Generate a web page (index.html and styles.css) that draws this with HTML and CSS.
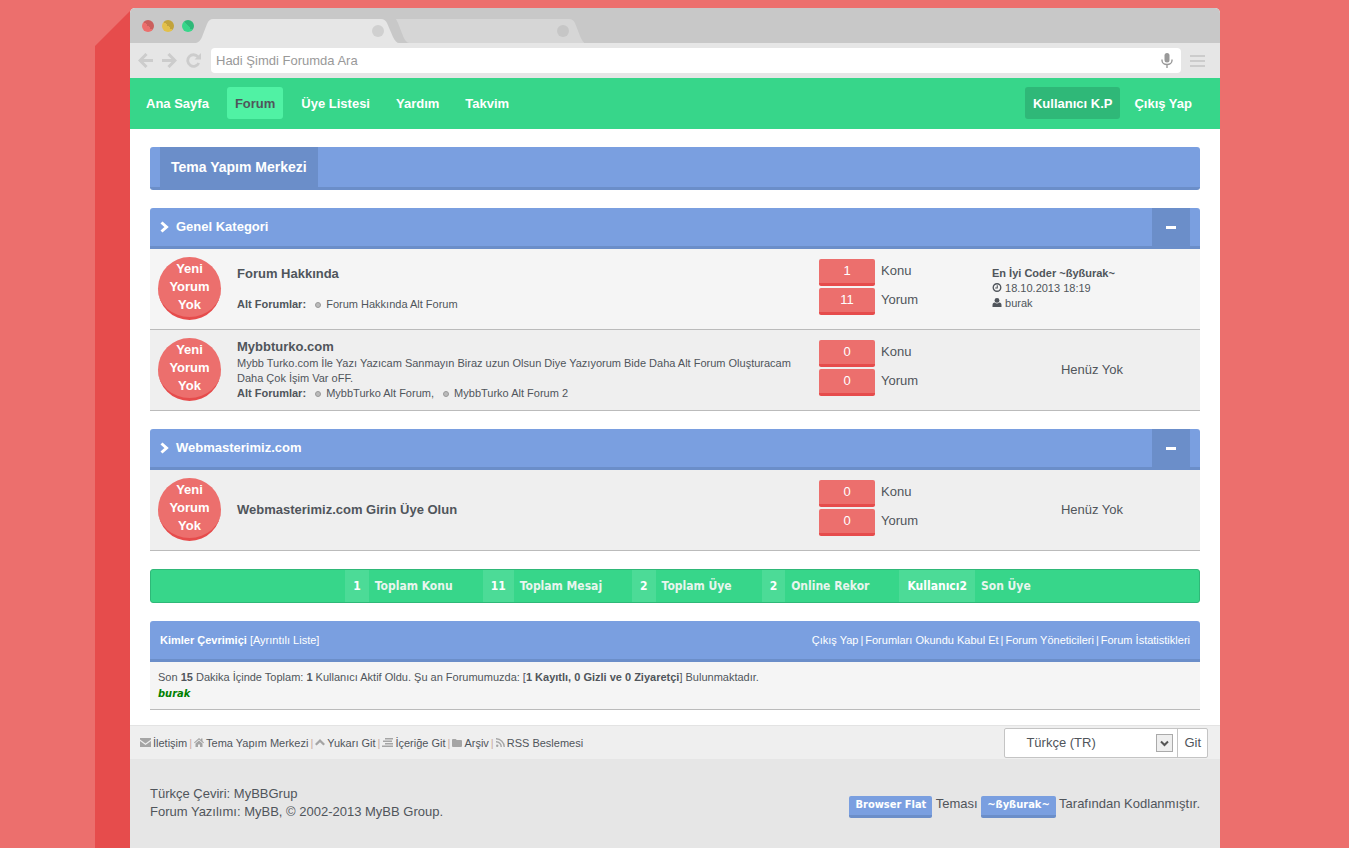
FILE: index.html
```
<!DOCTYPE html>
<html lang="tr">
<head>
    <meta charset="utf-8">
    <title>Tema Yapım Merkezi</title>
    <link rel="stylesheet" href="styles.css">
</head>
<body>
<!-- shared icons -->
<svg class="sprite" aria-hidden="true">
    <symbol id="chevron" viewBox="0 0 9 12"><path d="M1.5 1.5 L6.5 6 L1.5 10.5" fill="none" stroke="currentColor" stroke-width="3"/></symbol>
    <symbol id="dot" viewBox="0 0 6 6"><circle cx="3" cy="3" r="2.5" fill="#bbb" stroke="#999"/></symbol>
</svg>
<div class="page">
    <div class="side"></div>
    <div class="window">
        <div class="tabbar">
            <span class="light red"></span>
            <span class="light yellow"></span>
            <span class="light green"></span>
            <svg class="tabs" width="388" height="24" viewBox="0 0 388 24">
                <path d="M200 0H373Q377 0 379 4L384 17Q387 24 389 24H213Q210 24 207 17L202 4Q200 0 200 0Z" fill="#d6d6d6"/>
                <path d="M0 24Q4 23 6 18L11 5Q13 0 17 0H185Q189 0 191 4L197 18Q200 24 203 24Z" fill="#e6e6e6"/>
                <circle cx="182" cy="12" r="6" fill="#d0d0d0"/>
                <circle cx="367" cy="12" r="6" fill="#c6c6c6"/>
            </svg>
        </div>
        <form class="toolbar">
            <svg width="15" height="15" viewBox="0 0 15 15"><path d="M8.500 1 L2 7.500 L8.500 14 M2 7.500 H15" fill="none" stroke="#ccc" stroke-width="3"/></svg>
            <svg width="15" height="15" viewBox="0 0 15 15"><path d="M6.500 1 L13 7.500 L6.500 14 M13 7.500 H0" fill="none" stroke="#ccc" stroke-width="3"/></svg>
            <svg width="16" height="15" viewBox="0 0 16 15"><path d="M12 3.800 A5.800 5.800 0 1 0 12.800 10" fill="none" stroke="#ccc" stroke-width="2.800"/><path d="M15 0V6.500H8.500Z" fill="#ccc"/></svg>
            <label class="search">
                <input type="text" placeholder="Hadi Şimdi Forumda Ara" aria-label="Forumda Ara">
                <svg width="12" height="15" viewBox="0 0 12 15"><rect x="3.500" y="0" width="5" height="9.500" rx="2.500" fill="#999"/><path d="M1 6.500V7.500A5 4 0 0 0 11 7.500V6.500M6 11.500V15" fill="none" stroke="#999" stroke-width="1.400"/></svg>
            </label>
            <svg width="15" height="12" viewBox="0 0 15 12"><path d="M0 1H15M0 6H15M0 11H15" stroke="#ccc" stroke-width="2"/></svg>
        </form>
        <nav class="menu">
            <a href="#">Ana Sayfa</a>
            <a href="#" class="active">Forum</a>
            <a href="#">Üye Listesi</a>
            <a href="#">Yardım</a>
            <a href="#">Takvim</a>
            <div class="user">
                <a href="#" class="panel">Kullanıcı K.P</a>
                <a href="#">Çıkış Yap</a>
            </div>
        </nav>

        <main class="content">
            <div class="head crumb"><a href="#">Tema Yapım Merkezi</a></div>

            <section>
                <div class="head">
                    <svg width="9" height="12"><use href="#chevron"/></svg>
                    <a href="#">Genel Kategori</a>
                    <button class="toggle" type="button" aria-label="Daralt"></button>
                </div>
                <table class="forums">
                    <tr class="light-row">
                        <td class="status"><span>Yeni Yorum Yok</span></td>
                        <td>
                            <a href="#" class="title spaced">Forum Hakkında</a>
                            <div><b>Alt Forumlar:</b> <svg class="sub" width="6" height="6"><use href="#dot"/></svg> <a href="#">Forum Hakkında Alt Forum</a></div>
                        </td>
                        <td class="counts">
                            <div><span>1</span>Konu</div>
                            <div><span>11</span>Yorum</div>
                        </td>
                        <td class="last">
                            <a href="#"><b>En İyi Coder ~ßyßurak~</b></a><br>
                            <svg width="10" height="9" viewBox="0 0 10 10"><circle cx="5" cy="5" r="4.200" fill="none" stroke="currentColor" stroke-width="1.500"/><path d="M5.300 2.500V5.500H3" fill="none" stroke="currentColor" stroke-width="1.200"/></svg>
                            18.10.2013 18:19<br>
                            <svg width="10" height="9" viewBox="0 0 10 10"><circle cx="5" cy="2.700" r="2.700" fill="currentColor"/><path d="M0 10V8Q0 5 2.500 5Q5 7 7.500 5Q10 5 10 8V10Z" fill="currentColor"/></svg>
                            <a href="#">burak</a>
                        </td>
                    </tr>
                    <tr>
                        <td class="status"><span>Yeni Yorum Yok</span></td>
                        <td>
                            <a href="#" class="title">Mybbturko.com</a>
                            <div>Mybb Turko.com İle Yazı Yazıcam Sanmayın Biraz uzun Olsun Diye Yazıyorum Bide Daha Alt Forum Oluşturacam Daha Çok İşim Var oFF.</div>
                            <div><b>Alt Forumlar:</b> <svg class="sub" width="6" height="6"><use href="#dot"/></svg> <a href="#">MybbTurko Alt Forum</a>, <svg class="sub" width="6" height="6"><use href="#dot"/></svg> <a href="#">MybbTurko Alt Forum 2</a></div>
                        </td>
                        <td class="counts">
                            <div><span>0</span>Konu</div>
                            <div><span>0</span>Yorum</div>
                        </td>
                        <td class="last none">Henüz Yok</td>
                    </tr>
                </table>
            </section>

            <section>
                <div class="head">
                    <svg width="9" height="12"><use href="#chevron"/></svg>
                    <a href="#">Webmasterimiz.com</a>
                    <button class="toggle" type="button" aria-label="Daralt"></button>
                </div>
                <table class="forums">
                    <tr>
                        <td class="status"><span>Yeni Yorum Yok</span></td>
                        <td><a href="#" class="title">Webmasterimiz.com Girin Üye Olun</a></td>
                        <td class="counts">
                            <div><span>0</span>Konu</div>
                            <div><span>0</span>Yorum</div>
                        </td>
                        <td class="last none">Henüz Yok</td>
                    </tr>
                </table>
            </section>

            <div class="stats">
                <div><b>1</b>Toplam Konu</div>
                <div><b>11</b>Toplam Mesaj</div>
                <div><b>2</b>Toplam Üye</div>
                <div><b>2</b>Online Rekor</div>
                <div><b>Kullanıcı2</b>Son Üye</div>
            </div>

            <section>
                <div class="head small">
                    <span><b>Kimler Çevrimiçi</b> [<a href="#">Ayrıntılı Liste</a>]</span>
                    <span class="tools"><a href="#">Çıkış Yap</a>|<a href="#">Forumları Okundu Kabul Et</a>|<a href="#">Forum Yöneticileri</a>|<a href="#">Forum İstatistikleri</a></span>
                </div>
                <div class="online">
                    Son <b>15</b> Dakika İçinde Toplam: <b>1</b> Kullanıcı Aktif Oldu. Şu an Forumumuzda: [<b>1 Kayıtlı, 0 Gizli ve 0 Ziyaretçi</b>] Bulunmaktadır.<br>
                    <a href="#" class="admin">burak</a>
                </div>
            </section>
        </main>

        <div class="links">
            <div class="icons">
                <svg width="11" height="9" viewBox="0 0 11 9"><path d="M0 0H11V1.500L5.500 5.500L0 1.500Z"/><path d="M0 3L5.500 7L11 3V9H0Z"/></svg>
                <a href="#">İletişim</a> <i>|</i>
                <svg width="10" height="9" viewBox="0 0 10 9"><path d="M5 0L7 1.700V.5H8.500V3L10 4.500L9.300 5.200L5 1.600L.7 5.200L0 4.500Z"/><path d="M1.500 5.500L5 2.600L8.500 5.500V9H6V6.500H4V9H1.500Z"/></svg>
                <a href="#">Tema Yapım Merkezi</a> <i>|</i>
                <svg width="10" height="8" viewBox="0 0 10 8"><path d="M5 0L10 5L8.400 6.600L5 3.200L1.600 6.600L0 5Z"/></svg>
                <a href="#">Yukarı Git</a> <i>|</i>
                <svg width="11" height="9" viewBox="0 0 11 9"><path d="M3 0H11V1.500H3ZM1 2.500H10V4H1ZM3 5H11V6.500H3ZM0 7.500H11V9H0Z"/></svg>
                <a href="#">İçeriğe Git</a> <i>|</i>
                <svg width="10" height="8" viewBox="0 0 10 8"><path d="M0 1Q0 0 1 0H3.500Q4.500 0 4.500 1H9Q10 1 10 2V7Q10 8 9 8H1Q0 8 0 7Z"/></svg>
                <a href="#">Arşiv</a> <i>|</i>
                <svg width="9" height="9" viewBox="0 0 9 9"><circle cx="1.200" cy="7.800" r="1.200"/><path d="M0 3.700A5 5 0 0 1 5.200 9M0 .8A8 8 0 0 1 8.200 9" fill="none" stroke="#a5a5a5" stroke-width="1.400"/></svg>
                <a href="#">RSS Beslemesi</a>
            </div>
            <form class="lang">
                <label>
                    <select aria-label="Dil">
                        <option>Türkçe (TR)</option>
                    </select>
                    <svg width="17" height="18" viewBox="0 0 17 18"><rect x=".5" y=".5" width="16" height="17" fill="#eee" stroke="#aaa"/><path d="M5 7.500L8.500 11L12 7.500" fill="none" stroke="#555" stroke-width="2"/></svg>
                </label>
                <button type="submit">Git</button>
            </form>
        </div>

        <footer>
            <div>Türkçe Çeviri: <a href="#">MyBBGrup</a><br>Forum Yazılımı: <a href="#">MyBB</a>, © 2002-2013 <a href="#">MyBB Group</a>.</div>
            <div class="credit"><a href="#" class="tag">Browser Flat</a> Teması <a href="#" class="tag">~ßyßurak~</a> Tarafından Kodlanmıştır.</div>
        </footer>
    </div>
</div>
</body>
</html>
```
FILE: styles.css
```
* {
    box-sizing: border-box;
}
body {
    margin: 0;
    background: #ec6f6d;
    color: #50555b;
    font: 13px/18px "Liberation Sans", Arial, sans-serif;
}
a {
    color: inherit;
    text-decoration: none;
}
button, input, select {
    font: inherit;
    color: inherit;
    border: 0;
    margin: 0;
}
.sprite {
    display: none;
}

/* browser window */
.page {
    display: flex;
    min-height: 100vh;
    padding: 8px 129px 0 95px;
}
.side {
    width: 35px;
    background: #e64c4c;
    clip-path: polygon(0 38px, 100% 3px, 100% 100%, 0 100%);
}
.window {
    flex: 1;
    display: flex;
    flex-direction: column;
    background: #fff;
    border-radius: 5px 5px 0 0;
    overflow: hidden;
}
.tabbar {
    display: flex;
    gap: 8px;
    height: 35px;
    padding-left: 12px;
    background: #c8c8c8;
}
.light {
    width: 12px;
    height: 12px;
    margin-top: 12px;
    border-radius: 50%;
}
.red {
    background: linear-gradient(45deg, #ec6f6d 50%, #cb5f5d 50%);
}
.yellow {
    background: linear-gradient(45deg, #e3c04a 50%, #c2a33c 50%);
}
.green {
    background: linear-gradient(45deg, #37d68a 50%, #2fb878 50%);
}
.tabs {
    align-self: flex-end;
    margin-left: -6px;
}
.toolbar {
    display: flex;
    align-items: center;
    gap: 9px;
    height: 35px;
    padding: 0 15px 0 8px;
    background: #e6e6e6;
}
.search {
    flex: 1;
    display: flex;
    align-items: center;
    height: 25px;
    padding: 0 8px 0 5px;
    background: #fff;
    border-radius: 4px;
}
.search input {
    flex: 1;
    padding: 0;
    background: none;
    outline: 0;
}
.search input::placeholder {
    color: #999;
}

/* green menu */
.menu {
    display: flex;
    gap: 10px;
    padding: 9px 20px 10px 8px;
    background: #37d68a;
    color: #fff;
    font-weight: bold;
}
.menu a {
    padding: 1px 8px 0;
    line-height: 31px;
    border-radius: 3px;
}
.menu .active {
    background: #50f2a4;
    color: #50555b;
}
.user {
    display: flex;
    gap: 6px;
    margin-left: auto;
}
.menu .panel {
    background: #2fb878;
}

/* content */
.content {
    display: flex;
    flex-direction: column;
    gap: 18px;
    padding: 18px 20px 15px;
}
.head {
    display: flex;
    align-items: center;
    gap: 7px;
    height: 41px;
    padding: 0 10px;
    background: #7a9fe0;
    border-bottom: 3px solid #6b8ec9;
    border-radius: 3px 3px 0 0;
    color: #fff;
    font-weight: bold;
}
.crumb {
    height: 43px;
    border-radius: 3px;
}
.crumb a {
    padding: 0 11px;
    font-size: 14px;
    line-height: 40px;
    background: #6b8ec9;
}
.toggle {
    display: flex;
    align-items: center;
    justify-content: center;
    align-self: stretch;
    width: 38px;
    margin-left: auto;
    background: #6b8ec9;
}
.toggle::before {
    content: "";
    width: 10px;
    height: 3px;
    background: #fff;
}
.small {
    justify-content: space-between;
    font-size: 11px;
    font-weight: normal;
}
.tools {
    display: flex;
    gap: 2px;
}
.forums {
    width: 100%;
    table-layout: fixed;
    border-collapse: separate;
    border-spacing: 0;
    font-size: 11px;
    line-height: 15px;
}
.forums td {
    height: 81px;
    padding: 0 8px 1px;
    background: #efefef;
    border-bottom: 1px solid #bbb;
}
.forums .light-row td {
    background: #f5f5f5;
}
.forums .status {
    width: 79px;
    padding-top: 8px;
    vertical-align: top;
}
.status span {
    display: block;
    width: 63px;
    height: 63px;
    padding: 3px 8px 0;
    background: #ec6f6d;
    border-bottom: 3px solid #e64c4c;
    border-radius: 50%;
    color: #fff;
    font-size: 13px;
    font-weight: bold;
    line-height: 18px;
    text-align: center;
}
.title {
    display: block;
    font-size: 13px;
    font-weight: bold;
    line-height: 18px;
}
.spaced {
    margin-bottom: 14px;
}
.sub {
    margin: 0 2px 0 6px;
}
.forums .counts {
    width: 173px;
    padding-top: 10px;
    vertical-align: top;
    font-size: 13px;
}
.counts div {
    display: flex;
    gap: 6px;
    margin-bottom: 2px;
    line-height: 24px;
}
.counts span {
    width: 56px;
    background: #ec6f6d;
    border-bottom: 3px solid #e64c4c;
    border-radius: 2px;
    color: #fff;
    text-align: center;
}
.last {
    width: 216px;
}
.forums .none {
    font-size: 13px;
    text-align: center;
}
.stats {
    display: flex;
    justify-content: center;
    gap: 30px;
    padding-left: 26px;
    background: #37d68a;
    border: 1px solid #2fb878;
    border-radius: 3px;
    color: #e8f5ee;
    font: bold 12px/32px "DejaVu Sans Condensed", Tahoma, sans-serif;
}
.stats b {
    display: inline-block;
    margin-right: 6px;
    padding: 0 8px;
    background: #4cdb97;
    color: #fff;
}
.online {
    padding: 7px 8px;
    background: #f5f5f5;
    border-bottom: 1px solid #bbb;
    font-size: 11px;
    line-height: 16px;
}
.admin {
    color: green;
    font-family: "DejaVu Sans Condensed", Tahoma, sans-serif;
    font-style: italic;
    font-weight: bold;
}

/* bottom */
.links {
    display: flex;
    align-items: center;
    justify-content: space-between;
    height: 34px;
    padding: 0 12px 0 10px;
    background: #efefef;
    border-top: 1px solid #e3e3e3;
    font-size: 11px;
}
.icons {
    display: flex;
    align-items: center;
    gap: 2px;
}
.links svg {
    fill: #a5a5a5;
}
.links i {
    color: #c9a9a0;
    font-style: normal;
}
.lang {
    display: flex;
    height: 30px;
    background: #fff;
    border: 1px solid #c4c4c4;
    border-radius: 2px;
    font-size: 13px;
}
.lang label {
    position: relative;
}
.lang select {
    appearance: none;
    width: 172px;
    height: 28px;
    padding: 0 30px 0 21px;
    background: none;
}
.lang svg {
    position: absolute;
    top: 5px;
    right: 4px;
}
.lang button {
    padding: 0 6px;
    background: none;
    border-left: 1px solid #c4c4c4;
}
footer {
    flex: 1;
    display: flex;
    justify-content: space-between;
    align-items: flex-start;
    padding: 26px 20px;
    background: #e6e6e6;
}
.credit {
    padding-top: 10px;
}
.tag {
    display: inline-block;
    padding: 0 6px 1px;
    background: #7a9fe0;
    border-bottom: 3px solid #6b8ec9;
    border-radius: 2px;
    color: #fff;
    font: bold 11px/18px "DejaVu Sans Condensed", Verdana, sans-serif;
}
```
